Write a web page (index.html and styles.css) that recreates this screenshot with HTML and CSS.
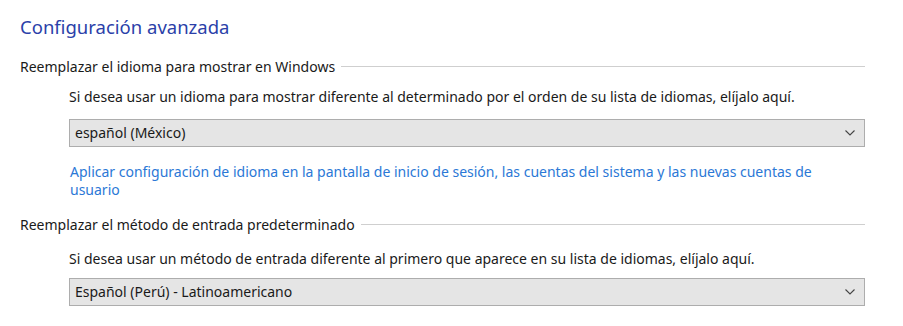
FILE: index.html
```html
<!DOCTYPE html>
<html lang="es">
<head>
    <meta charset="UTF-8">
    <meta name="viewport" content="width=device-width, initial-scale=1.0">
    <title>Configuración avanzada</title>
    <link rel="stylesheet" href="styles.css">
</head>
<body>
    <div class="panel">
        <h1 class="title">Configuración avanzada</h1>

        <div class="group">
            <div class="group-header">
                <span>Reemplazar el idioma para mostrar en Windows</span>
                <span class="rule"></span>
            </div>
            <div class="group-body">
                <p class="desc">Si desea usar un idioma para mostrar diferente al determinado por el orden de su lista de idiomas, elíjalo aquí.</p>
                <div class="dropdown">
                    <span>español (México)</span>
                    <svg class="chevron" width="10" height="6" viewBox="0 0 10 6"><polyline points="0.5,0.5 5,5 9.5,0.5" fill="none" stroke="#444" stroke-width="1.1"/></svg>
                </div>
                <a class="link" href="#">Aplicar configuración de idioma en la pantalla de inicio de sesión, las cuentas del sistema y las nuevas cuentas de usuario</a>
            </div>
        </div>

        <div class="group second">
            <div class="group-header">
                <span>Reemplazar el método de entrada predeterminado</span>
                <span class="rule"></span>
            </div>
            <div class="group-body">
                <p class="desc">Si desea usar un método de entrada diferente al primero que aparece en su lista de idiomas, elíjalo aquí.</p>
                <div class="dropdown">
                    <span>Español (Perú) - Latinoamericano</span>
                    <svg class="chevron" width="10" height="6" viewBox="0 0 10 6"><polyline points="0.5,0.5 5,5 9.5,0.5" fill="none" stroke="#444" stroke-width="1.1"/></svg>
                </div>
            </div>
        </div>
    </div>
</body>
</html>
```

FILE: styles.css
```css
body {
    margin: 0;
    padding: 0;
    background: #ffffff;
    font-family: "Noto Sans", "Open Sans", sans-serif;
    font-size: 14px;
    line-height: 18px;
    color: #1a1a1a;
}

.panel {
    width: 845px;
    padding: 15px 0 0 20px;
}

.title {
    margin: 0;
    font-size: 18.5px;
    line-height: 24px;
    font-weight: normal;
    color: #2b3fa9;
}

.group {
    margin-top: 19px;
}
.group.second {
    margin-top: 17px;
}

.group-header {
    display: flex;
    align-items: center;
    gap: 6px;
}
.rule {
    flex: 1;
    height: 1px;
    background: #cfcfcf;
    margin-top: -1px;
}

.group-body {
    padding-left: 49px;
}

.desc {
    margin: 12px 0 13px 0;
}
.second .desc {
    margin: 16px 0 10px 0;
}

.dropdown {
    height: 28px;
    box-sizing: border-box;
    border: 1px solid #adadad;
    background: #e5e5e5;
    display: flex;
    align-items: center;
    justify-content: space-between;
    padding: 0 9px 0 5px;
}

.link {
    display: block;
    margin-top: 16px;
    padding-left: 1px;
    color: #2b78d6;
    text-decoration: none;
    max-width: 760px;
}
```
